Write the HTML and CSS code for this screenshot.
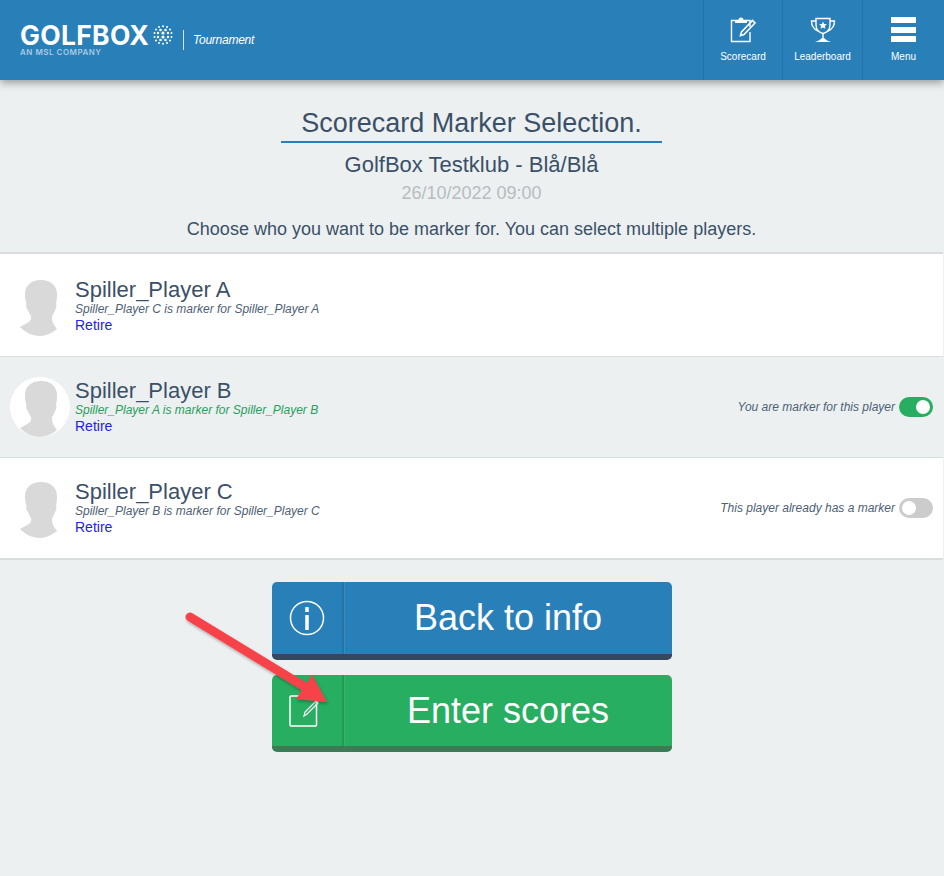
FILE: index.html
```html
<!DOCTYPE html>
<html lang="en">
<head>
  <meta charset="UTF-8">
  <title>Scorecard Marker Selection</title>
  <link rel="stylesheet" href="styles.css">
</head>
<body>
  <header class="topbar">
    <div class="brand">
      <div class="logo">
        <div class="logo-name">
          <span>GOLFBOX</span>
          <svg class="globe" width="20" height="20" viewBox="0 0 20 20" fill="#fff">
            <circle cx="10" cy="1.2" r="1"/><circle cx="6" cy="2" r="1"/><circle cx="14" cy="2" r="1"/>
            <circle cx="3" cy="4.5" r="1"/><circle cx="7.5" cy="5" r="1.3"/><circle cx="12.5" cy="5" r="1.3"/><circle cx="17" cy="4.5" r="1"/>
            <circle cx="1.5" cy="8" r="1"/><circle cx="5" cy="8" r="1.2"/><circle cx="10" cy="8" r="1.6"/><circle cx="15" cy="8" r="1.2"/><circle cx="18.5" cy="8" r="1"/>
            <circle cx="1.5" cy="12" r="1"/><circle cx="5" cy="12" r="1.2"/><circle cx="10" cy="12" r="1.6"/><circle cx="15" cy="12" r="1.2"/><circle cx="18.5" cy="12" r="1"/>
            <circle cx="3" cy="15.5" r="1"/><circle cx="7.5" cy="15" r="1.3"/><circle cx="12.5" cy="15" r="1.3"/><circle cx="17" cy="15.5" r="1"/>
            <circle cx="6" cy="18" r="1"/><circle cx="10" cy="18.8" r="1"/><circle cx="14" cy="18" r="1"/>
          </svg>
        </div>
        <div class="logo-sub">AN MSL COMPANY</div>
      </div>
      <div class="brand-product">Tournament</div>
    </div>
    <nav class="topnav">
      <a class="topnav-item">
        <svg width="26" height="26" viewBox="0 0 26 26" fill="none" stroke="#fff" stroke-width="1.4">
          <path d="M20 10V3.500H1.500V24.500H20V15"/>
          <path d="M5 6V3h3.500a2.500 2.500 0 0 1 5 0H17v3z" fill="#fff" stroke="none"/>
          <path d="M11.500 15l-1 3.500 3.500-1L25 6l-2.500-2.500z" stroke-width="1.6"/>
        </svg>
        <span>Scorecard</span>
      </a>
      <a class="topnav-item">
        <svg width="26" height="26" viewBox="0 0 26 26" fill="none" stroke="#fff" stroke-width="1.4">
          <path d="M6 1.500h14v6c0 5-3 8-7 9-4-1-7-4-7-9z"/>
          <path d="M6 4H1.500c0 5 2 8 6.500 10M20 4h4.500c0 5-2 8-6.500 10"/>
          <path d="M13 17v4"/>
          <path d="M5 25c3-1 5-2 7-4h2c2 2 4 3 7 4z" fill="#fff" stroke="none"/>
          <path d="M13 4.500l1.100 2.600 2.800.2-2.100 1.800.7 2.700-2.500-1.400-2.500 1.400.7-2.700-2.100-1.800 2.800-.2z" fill="#fff" stroke="none"/>
        </svg>
        <span>Leaderboard</span>
      </a>
      <a class="topnav-item">
        <div class="burger"><i></i><i></i><i></i></div>
        <span>Menu</span>
      </a>
    </nav>
  </header>

  <main>
    <section class="intro">
      <h1>Scorecard Marker Selection.</h1>
      <h2>GolfBox Testklub - Blå/Blå</h2>
      <div class="date">26/10/2022 09:00</div>
      <p>Choose who you want to be marker for. You can select multiple players.</p>
    </section>

    <ul class="players">
      <li class="player">
        <div class="avatar">
          <svg width="60" height="60" viewBox="0 0 60 60"><use href="#person"/></svg>
        </div>
        <div class="player-info">
          <div class="player-name">Spiller_Player A</div>
          <div class="player-marker">Spiller_Player C is marker for Spiller_Player A</div>
          <a class="retire">Retire</a>
        </div>
      </li>
      <li class="player selected">
        <div class="avatar">
          <svg width="60" height="60" viewBox="0 0 60 60"><use href="#person"/></svg>
        </div>
        <div class="player-info">
          <div class="player-name">Spiller_Player B</div>
          <div class="player-marker green">Spiller_Player A is marker for Spiller_Player B</div>
          <a class="retire">Retire</a>
        </div>
        <div class="player-status">
          <span>You are marker for this player</span>
          <span class="switch on"></span>
        </div>
      </li>
      <li class="player">
        <div class="avatar">
          <svg width="60" height="60" viewBox="0 0 60 60"><use href="#person"/></svg>
        </div>
        <div class="player-info">
          <div class="player-name">Spiller_Player C</div>
          <div class="player-marker">Spiller_Player B is marker for Spiller_Player C</div>
          <a class="retire">Retire</a>
        </div>
        <div class="player-status">
          <span>This player already has a marker</span>
          <span class="switch"></span>
        </div>
      </li>
    </ul>

    <div class="actions">
      <a class="btn btn-blue">
        <span class="btn-icon">
          <svg width="36" height="36" viewBox="0 0 36 36" fill="none" stroke="#fff" stroke-width="1.5">
            <circle cx="18" cy="18" r="16.500"/>
            <path d="M18 15v15" stroke-width="3.500"/>
            <path d="M18 7v5" stroke-width="3.500"/>
          </svg>
        </span>
        <span class="btn-label">Back to info</span>
      </a>
      <a class="btn btn-green">
        <span class="btn-icon">
          <svg class="edit-icon" width="29" height="32" viewBox="0 0 29 32" fill="none" stroke="#fff" stroke-width="1.5">
            <rect x="1" y="1" width="26.500" height="30" rx="1"/>
            <path d="M15 21l1-4L27 6l2 2-11 11z" stroke-width="1.2"/>
          </svg>
        </span>
        <span class="btn-label">Enter scores</span>
      </a>
      <svg class="arrow" width="170" height="130" viewBox="0 0 170 130">
        <defs>
          <filter id="arrow-shadow" x="-10%" y="-10%" width="120%" height="120%">
            <feDropShadow dx="1" dy="2" stdDeviation="1.5" flood-color="#000" flood-opacity=".3"/>
          </filter>
        </defs>
        <g filter="url(#arrow-shadow)" fill="#f8434a">
          <path d="M8 7L123 77" stroke="#f8434a" stroke-width="9" stroke-linecap="round"/>
          <path d="M145 92L130 65 114 89z"/>
        </g>
      </svg>
    </div>
  </main>

  <svg class="defs" width="0" height="0">
    <symbol id="person" viewBox="0 0 60 60">
      <path fill="#d9d9d9" d="M31 4C41 4 47 10 47 18C47 23 46.500 26 46 28C47 30 46 33 45 34C44 37 43 39 42 40C41.500 44 43 48 47 53C42 57 36 60 30 60C22 60 15 56 10 51C13 49 16 48 19 46C21 44 21.500 42 21 40C19.500 38 18.500 36 18 34C16.500 33 15.500 30 16.500 28C15.500 25 15 22 15 18C15 10 21 4 31 4z"/>
    </symbol>
  </svg>
</body>
</html>
```

FILE: styles.css
```css
* {
    box-sizing: border-box;
}

body {
    margin: 0;
    min-height: 876px;
    background-color: #ecf0f1;
    font-family: "Liberation Sans", Arial, sans-serif;
    color: #3b5068;
}

.defs {
    display: block;
}

/* top bar */
.topbar {
    display: flex;
    justify-content: space-between;
    height: 80px;
    background-color: #2980b9;
    box-shadow: 0 3px 8px rgba(0, 0, 0, 0.35);
    color: #fff;
}

.brand {
    display: flex;
    align-items: center;
    padding-left: 20px;
}

.logo {
    width: 163px;
}

.logo-name {
    display: flex;
    align-items: center;
    gap: 4px;
    font-family: Inter, "Liberation Sans", sans-serif;
    font-weight: 700;
    font-size: 26.5px;
    line-height: 22px;
    letter-spacing: 0.3px;
}

.logo-sub {
    margin-top: 2px;
    font-family: Inter, "Liberation Sans", sans-serif;
    font-weight: 600;
    font-size: 8px;
    line-height: 9px;
    letter-spacing: 0.5px;
    color: #a9c9e2;
}

.brand-product {
    border-left: 1px solid #d5e6f1;
    height: 20px;
    padding-left: 9px;
    font-size: 12px;
    line-height: 20px;
    font-style: italic;
    letter-spacing: -0.25px;
}

.topnav {
    display: flex;
}

.topnav-item {
    display: flex;
    flex-direction: column;
    align-items: center;
    width: 80px;
    padding-top: 17px;
    border-left: 1px solid #2573a7;
    font-size: 10px;
    color: #fff;
}

.topnav-item:first-child {
    width: 79px;
}

.topnav-item:last-child {
    width: 82px;
}

.topnav-item svg {
    display: block;
    height: 26px;
}

.topnav-item span {
    margin-top: 8px;
    line-height: 11px;
}

.burger {
    display: flex;
    flex-direction: column;
    justify-content: space-between;
    width: 25px;
    height: 25px;
    margin-bottom: 1px;
}

.burger i {
    display: block;
    height: 6px;
    background-color: #fff;
}

/* heading */
.intro {
    text-align: center;
    padding: 26px 1px 0 0;
}

.intro h1 {
    width: 381px;
    margin: 0 auto;
    padding-bottom: 1px;
    border-bottom: 2px solid #2980b9;
    font-size: 27px;
    font-weight: 400;
    line-height: 34px;
}

.intro h2 {
    margin: 9px 0 0;
    font-size: 22px;
    font-weight: 400;
    line-height: 26px;
}

.date {
    margin-top: 4px;
    font-size: 18px;
    line-height: 22px;
    color: #b7bcbf;
}

.intro p {
    margin: 14px 0 0;
    padding-bottom: 12px;
    font-size: 18px;
    line-height: 22px;
}

/* players */
.players {
    list-style: none;
    margin: 0 1px 0 0;
    padding: 0;
    border-top: 2px solid #d9dddd;
    border-bottom: 2px solid #d9dddd;
}

.player {
    display: flex;
    align-items: flex-start;
    height: 101px;
    padding: 20px 10px 0 10px;
    background-color: #fff;
    border-bottom: 1px solid #d9dddd;
}

.player:first-child {
    height: 103px;
    padding-top: 22px;
}

.player:last-child {
    height: 100px;
    border-bottom: 0;
}

.player.selected {
    background-color: #ecf0f1;
}

.avatar {
    width: 60px;
    height: 60px;
    margin-right: 5px;
    border-radius: 50%;
}

.selected .avatar {
    background-color: #fff;
}

.avatar svg {
    display: block;
}

.player-info {
    flex: 1;
    padding-top: 2px;
}

.player-name {
    font-size: 22px;
    line-height: 24px;
}

.player-marker {
    font-size: 12px;
    font-style: italic;
    line-height: 14px;
    color: #4d6076;
}

.player-marker.green {
    color: #2a9d5c;
}

.retire {
    display: block;
    font-size: 14px;
    line-height: 18px;
    color: #2222ee;
}

.player-status {
    display: flex;
    align-items: center;
    gap: 4px;
    margin-top: 20px;
    font-size: 12px;
    font-style: italic;
    color: #4d6076;
}

.switch {
    position: relative;
    display: block;
    width: 34px;
    height: 20px;
    border-radius: 10px;
    background-color: #cccccc;
}

.switch::after {
    content: "";
    position: absolute;
    top: 3px;
    left: 3px;
    width: 14px;
    height: 14px;
    border-radius: 50%;
    background-color: #fff;
}

.switch.on {
    background-color: #27ae60;
}

.switch.on::after {
    left: 17px;
}

/* buttons */
.actions {
    position: relative;
    display: flex;
    flex-direction: column;
    align-items: center;
    gap: 15px;
    padding-top: 22px;
}

.btn {
    display: flex;
    width: 400px;
    height: 78px;
    border-radius: 5px;
    border-bottom: 6px solid;
    color: #fff;
}

.btn-blue {
    background-color: #2980b9;
    border-bottom-color: #34495e;
}

.btn-green {
    height: 77px;
    background-color: #27ae60;
    border-bottom-color: #3f7a56;
}

.btn-icon {
    display: flex;
    align-items: center;
    justify-content: center;
    width: 72px;
    border-right: 2px solid;
    box-shadow: 1px 0 0 rgba(255, 255, 255, 0.08);
}

.btn-blue .btn-icon {
    border-right-color: #2573a7;
}

.btn-green .btn-icon {
    border-right-color: #219a54;
}

.edit-icon {
    margin-right: 7px;
    overflow: visible;
}

.btn-label {
    flex: 1;
    text-align: center;
    font-size: 36px;
    line-height: 72px;
}

/* annotation added on the screenshot */
.arrow {
    position: absolute;
    left: 182px;
    top: 50px;
}
```
